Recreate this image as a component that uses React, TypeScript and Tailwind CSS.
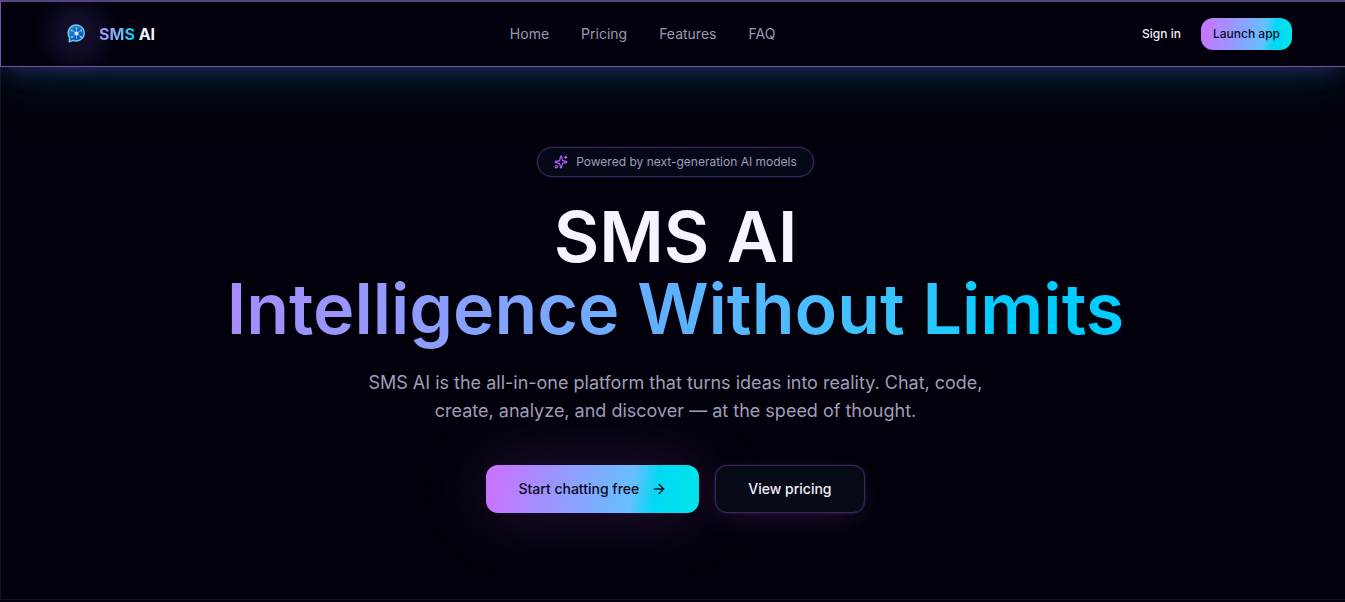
import { ArrowRight, Sparkles } from "lucide-react";

interface NavLinkType {
  name: string;
  link: string;
}

const navLinks: NavLinkType[] = [
  { name: "Home", link: "#home" },
  { name: "Pricing", link: "#pricing" },
  { name: "Features", link: "#features" },
  { name: "FAQ", link: "#faq" },
];

function Logo() {
  return (
    <svg viewBox="0 0 36 36" className="w-9 h-9" aria-hidden="true">
      <defs>
        <linearGradient id="bubble" x1="0" y1="0" x2="1" y2="1">
          <stop offset="0" stopColor="#2f86dc" />
          <stop offset="1" stopColor="#0b46ac" />
        </linearGradient>
      </defs>
      <path
        d="M10.3 25.8L10.5 21.4A8 8 0 1 1 14.2 24.4Z"
        fill="url(#bubble)"
        stroke="#6ccdf5"
        strokeWidth="1.4"
        strokeLinejoin="round"
      />
      <path
        d="M17.5 17.3V12M17.5 17.3l4.5-2.8M17.5 17.3l4.3 3.6M17.5 17.3L13 14.5M17.5 17.3l-4.3 3.6M17.5 17.3v5"
        stroke="#4fb2f0"
        strokeWidth="0.9"
        strokeLinecap="round"
      />
      <g fill="#6fd0ff">
        <circle cx="17.5" cy="12" r="1" />
        <circle cx="22.2" cy="14.4" r="1" />
        <circle cx="22" cy="21" r="1" />
        <circle cx="12.8" cy="14.4" r="1" />
        <circle cx="13" cy="21" r="1" />
      </g>
      <circle cx="17.5" cy="17.6" r="2" fill="#c9f2ff" />
    </svg>
  );
}

function Header() {
  return (
    <header className="relative w-full border-l border-b border-[#7552ab] border-t-2 border-t-[#57437d] bg-[#02000c] pl-[58px] pr-[53px] py-4 shadow-[0_4px_24px_-4px_rgba(100,84,190,0.45),0_16px_56px_-4px_rgba(0,140,160,0.24)]">
      <div className="flex items-center justify-between">
        <a href="#home" className="flex items-center gap-1">
          <span className="-my-1 rounded-full shadow-[0_0_28px_8px_rgba(110,80,200,0.26)] bg-[#1a1233]/70">
            <Logo />
          </span>
          <span className="text-base font-bold text-[#f5f2ff]">
            <span className="bg-linear-to-r from-[#a78bfa] to-[#00d0f5] to-85% bg-clip-text text-transparent">
              SMS
            </span>{" "}
            AI
          </span>
        </a>
        <nav className="flex items-center gap-8">
          {navLinks.map((item) => (
            <a key={item.name} href={item.link} className="text-sm text-[#9d99b3]">
              {item.name}
            </a>
          ))}
        </nav>
        <div className="flex items-center gap-2">
          <button className="h-8 px-3 text-xs font-medium text-[#f1eefb]">
            Sign in
          </button>
          <button className="h-8 px-3 rounded-xl text-xs font-medium text-[#0a0a1e] bg-[linear-gradient(100deg,#c675ff_5%,#66bfff_68%,#00d9f5_80%,#00e5ea)]">
            Launch app
          </button>
        </div>
      </div>
    </header>
  );
}

function Hero() {
  return (
    <section className="w-full pl-[5px] pt-20 pb-[86px] border-l border-b border-[#14121d] flex flex-col items-center text-center">
      <div className="flex items-center gap-2 rounded-full border border-[#3a2762] bg-[#040817] px-4 py-1.5 text-xs text-[#a19db8] shadow-[0_0_2px_#3a2762]">
        <Sparkles className="w-3.5 h-3.5 text-[#b95cff]" />
        Powered by next-generation AI models
      </div>
      <h1 className="mt-6 text-[70px] leading-[72px] font-semibold text-[#f7f3ff]">
        SMS AI
        <span className="block pb-2 bg-linear-to-r from-[#a78bfa] from-0% via-[#5eb1ff] via-50% to-[#00ccff] to-85% bg-clip-text text-transparent">
          Intelligence Without Limits
        </span>
      </h1>
      <p className="mt-4 max-w-2xl text-lg leading-7 text-[#a19db8]">
        SMS AI is the all-in-one platform that turns ideas into reality. Chat,
        code, create, analyze, and discover — at the speed of thought.
      </p>
      <div className="mt-10 flex items-center gap-4">
        <button className="flex items-center gap-3 h-12 px-8 rounded-xl text-sm font-medium text-[#0a0a1e] bg-[linear-gradient(100deg,#c675ff_5%,#66bfff_68%,#00d9f5_79%,#00e5ea)] shadow-[0_0_64px_rgba(150,70,200,0.3)]">
          Start chatting free
          <ArrowRight className="w-4 h-4" />
        </button>
        <button className="h-12 px-8 rounded-xl border border-[#3a2762] bg-[#060a17] text-sm font-medium text-[#f1eefb] shadow-[0_0_2px_#3a2762,0_8px_32px_-8px_rgba(150,70,200,0.3)]">
          View pricing
        </button>
      </div>
    </section>
  );
}

export default function App() {
  return (
    <div className="min-h-screen bg-[#02000a] font-['Inter',sans-serif]">
      <Header />
      <main>
        <Hero />
      </main>
    </div>
  );
}
